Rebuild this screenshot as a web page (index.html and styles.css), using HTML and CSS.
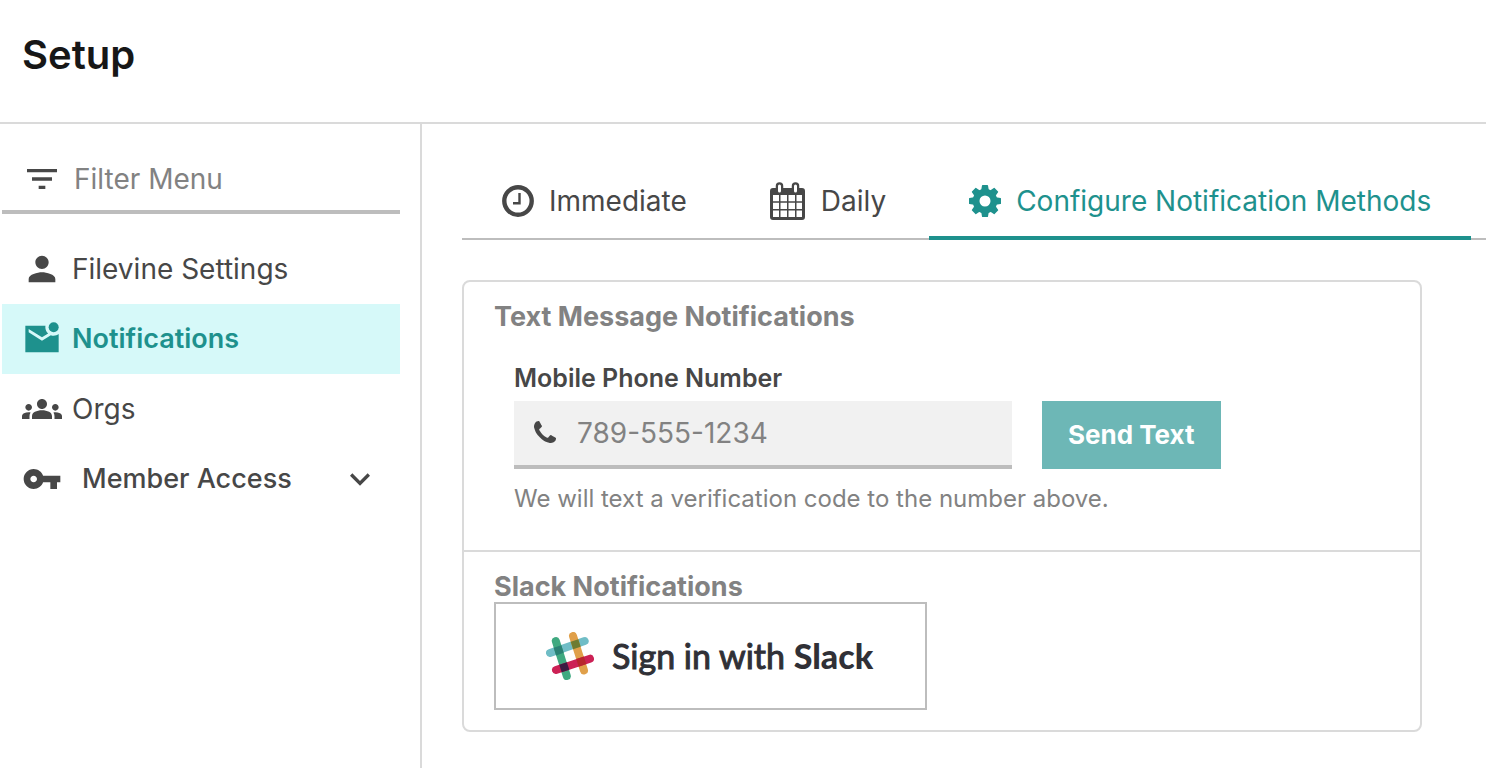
FILE: index.html
```html
<!DOCTYPE html>
<html lang="en">
<head>
<meta charset="utf-8">
<meta name="viewport" content="width=device-width, initial-scale=1">
<title>Setup</title>
<link rel="stylesheet" href="styles.css">
</head>
<body>
<header class="header"><h1 class="title">Setup</h1></header>
<div class="layout">
  <aside class="sidebar">
    <div class="filter">
      <svg class="icon" viewBox="0 0 24 24" aria-hidden="true"><path d="M10 18h4v-2h-4v2zM3 6v2h18V6H3zm3 7h12v-2H6v2z"/></svg>
      <input class="filter-input" type="text" placeholder="Filter Menu" aria-label="Filter Menu">
    </div>
    <nav class="menu">
      <a class="menu-item" href="#settings">
        <svg class="icon" viewBox="0 0 24 24" aria-hidden="true"><path d="M12 12c2.21 0 4-1.79 4-4s-1.79-4-4-4-4 1.79-4 4 1.79 4 4 4zm0 2c-2.67 0-8 1.34-8 4v2h16v-2c0-2.66-5.330-4-8-4z"/></svg>
        <span>Filevine Settings</span>
      </a>
      <a class="menu-item menu-item-active" href="#notifications" aria-current="page">
        <svg class="icon" viewBox="0 0 24 24" aria-hidden="true"><path d="M22 8.980V20H2V4h12.100c-.060.320-.100.660-.100 1 0 1.480.650 2.790 1.670 3.710L12 11 4 6v2l8 5 5.300-3.320c.540.200 1.100.320 1.700.320 1.130 0 2.160-.390 3-1.020z"/><circle cx="19" cy="5" r="3"/></svg>
        <span>Notifications</span>
      </a>
      <a class="menu-item" href="#orgs">
        <svg class="icon" viewBox="0 0 24 24" aria-hidden="true"><path d="M12 12.750c1.630 0 3.070.390 4.240.900 1.080.480 1.760 1.560 1.760 2.730V18H6v-1.610c0-1.180.680-2.260 1.760-2.730 1.170-.520 2.610-.910 4.240-.910zM4 13c1.100 0 2-.900 2-2s-.900-2-2-2-2 .900-2 2 .900 2 2 2zm1.130 1.100c-.370-.060-.740-.100-1.130-.100-.990 0-1.930.210-2.780.580C.480 14.900 0 15.620 0 16.430V18h4.500v-1.610c0-.830.230-1.610.630-2.290zM20 13c1.100 0 2-.900 2-2s-.900-2-2-2-2 .900-2 2 .900 2 2 2zm4 3.430c0-.810-.480-1.530-1.220-1.850-.850-.370-1.790-.580-2.780-.580-.390 0-.760.040-1.130.100.400.680.630 1.460.630 2.290V18H24v-1.570zM12 6c1.660 0 3 1.340 3 3s-1.340 3-3 3-3-1.340-3-3 1.340-3 3-3z"/></svg>
        <span>Orgs</span>
      </a>
      <button class="menu-item menu-group" type="button" aria-expanded="false">
        <svg class="icon" viewBox="0 0 24 24" aria-hidden="true"><path d="M12.650 10C11.830 7.670 9.610 6 7 6c-3.310 0-6 2.690-6 6s2.690 6 6 6c2.610 0 4.830-1.670 5.650-4H17v4h4v-4h2v-4H12.650zM7 14c-1.100 0-2-.900-2-2s.900-2 2-2 2 .900 2 2-.900 2-2 2z"/></svg>
        <span class="menu-label">Member Access</span>
        <svg class="icon" viewBox="0 0 24 24" aria-hidden="true"><path d="M16.590 8.590 12 13.170 7.410 8.590 6 10l6 6 6-6z"/></svg>
      </button>
    </nav>
  </aside>
  <main class="main">
    <nav class="tabs">
      <a class="tab" href="#immediate">
        <svg class="tab-icon" viewBox="0 0 32 32" aria-hidden="true"><circle cx="16" cy="16" r="13.700" fill="none" stroke="currentColor" stroke-width="4.400"/><path d="M17.500 8v10.200H11" fill="none" stroke="currentColor" stroke-width="2.400"/></svg>
        <span>Immediate</span>
      </a>
      <a class="tab" href="#daily">
        <svg class="calendar-icon" viewBox="0 0 36 38" aria-hidden="true"><path fill-rule="evenodd" d="M3 6h29a3 3 0 0 1 3 3v26a3 3 0 0 1-3 3H3a3 3 0 0 1-3-3V9a3 3 0 0 1 3-3zM3 13v6.300h6V13zm7.500 0v6.300h6.500V13zm8 0v6.300h6.500V13zm8 0v6.300H32V13zM3 20.700V27h6v-6.300zm7.500 0V27h6.500v-6.300zm8 0V27h6.500v-6.300zm8 0V27H32v-6.300zM3 28.500V35h6v-6.500zm7.500 0V35h6.500v-6.500zm8 0V35h6.500v-6.500zm8 0V35H32v-6.500z"/><path d="M9.500 4v5M25.500 4v5" fill="none" stroke="currentColor" stroke-width="7.500" stroke-linecap="round"/><path d="M9.500 4v5M25.500 4v5" fill="none" stroke="#fff" stroke-width="3" stroke-linecap="round"/></svg>
        <span>Daily</span>
      </a>
      <a class="tab tab-active" href="#methods" aria-current="page">
        <svg class="tab-icon" viewBox="-16 -16 32 32" aria-hidden="true">
          <circle r="8.900" fill="none" stroke="currentColor" stroke-width="6.800"/>
          <g id="teeth"><path id="tooth" d="M-3.800-11l.8-4.500q.1-.5.600-.5h4.800q.5 0 .6.500L3.800-11zM-3.800 11l.8 4.500q.1.500.6.500h4.800q.5 0 .6-.500L3.800 11z"/><use href="#tooth" transform="rotate(90)"/></g>
          <use href="#teeth" transform="rotate(45)"/>
        </svg>
        <span>Configure Notification Methods</span>
      </a>
    </nav>
    <div class="card">
      <section class="section">
        <h2 class="section-title">Text Message Notifications</h2>
        <form class="phone-form">
          <label class="label" for="phone">Mobile Phone Number</label>
          <div class="phone-row">
            <div class="phone-field">
              <svg class="phone-icon" viewBox="0 0 1792 1792" aria-hidden="true"><path d="M1600 1240q0 27-10 70.500t-21 68.500q-21 50-122 106-94 51-186 51-27 0-53-3.500t-57.500-12.500-47-14.500-55.500-20.500-49-18q-98-35-175-83-127-79-264-216t-216-264q-48-77-83-175-3-9-18-49t-20.500-55.500-14.500-47-12.500-57.500-3.500-53q0-92 51-186 56-101 106-122 25-11 68.500-21t70.500-10q14 0 21 3 18 6 53 76 11 19 30 54t35 63.500 31 53.500q3 4 17.500 25t21.500 35.500 7 28.500q0 20-28.500 50t-62 55-62 53-28.500 46q0 9 5 22.500t8.500 20.500 14 24 11.500 19q76 137 174 235t235 174q2 1 19 11.500t24 14 20.500 8.500 22.500 5q18 0 46-28.500t53-62 55-62 50-28.500q14 0 28.500 7t35.500 21.500 25 17.500q25 15 53.500 31t63.500 35 54 30q70 35 76 53 3 7 3 21z"/></svg>
              <input class="phone-input" id="phone" type="tel" placeholder="789-555-1234">
            </div>
            <button class="send" type="button">Send Text</button>
          </div>
          <p class="help">We will text a verification code to the number above.</p>
        </form>
      </section>
      <section class="section">
        <h2 class="section-title">Slack Notifications</h2>
        <button class="slack" type="button">
          <svg class="slack-logo" viewBox="0 0 48 48" aria-hidden="true">
            <g fill="none" stroke-width="8" stroke-linecap="round">
              <path stroke="#70bdc6" d="M4 21 38.700 9"/><path stroke="#e0a04a" d="M27 4l11 34.500"/><path stroke="#3fa980" d="M9.800 9l11 35"/><path stroke="#cc2155" d="M10 38l34-11.300"/>
            </g>
            <path fill="#2b8174" d="M7.700 15.800l7.600-2.500 2.400 7.500-7.600 2.600z"/>
            <path fill="#6d7c31" d="M24.700 9.800l7.600-2.600 2.400 7.600-7.600 2.500z"/>
            <path fill="#3b1c42" d="M13.300 32.700l7.600-2.500 2.400 7.500-7.600 2.600z"/>
            <path fill="#b8262d" d="M30.300 27.100l7.600-2.500 2.400 7.500-7.600 2.600z"/>
          </svg>
          <span><span class="slack-action">Sign in with</span> <strong class="slack-name">Slack</strong></span>
        </button>
      </section>
    </div>
  </main>
</div>
</body>
</html>
```
FILE: styles.css
```css
* { box-sizing: border-box; }

body {
  margin: 0;
  min-height: 100vh;
  display: flex;
  flex-direction: column;
  background: #fff;
  color: #474747;
  font-family: Inter, "Liberation Sans", sans-serif;
  font-size: 28px;
  line-height: 36px;
}

button, input { font: inherit; color: inherit; }
svg { fill: currentColor; flex: none; }

.header {
  padding: 31px 22px 43px;
  border-bottom: 2px solid #dadada;
}
.title {
  margin: 0;
  color: #171717;
  font-size: 40px;
  font-weight: 600;
  line-height: 48px;
}

.layout { flex: 1; display: flex; }

.sidebar {
  flex: none;
  width: 422px;
  padding: 22px 20px 22px 2px;
  border-right: 2px solid #dadada;
}
.icon { width: 40px; height: 40px; }
.filter {
  display: flex;
  align-items: center;
  height: 68px;
  padding: 2px 0 0 20px;
  border-bottom: 4px solid #bdbdbd;
}
.filter-input {
  flex: 1;
  min-width: 0;
  padding: 0 12px;
  border: 0;
  background: none;
  outline: 0;
}
.filter-input::placeholder, .phone-input::placeholder { color: #828282; opacity: 1; }

.menu { display: flex; flex-direction: column; margin-top: 20px; }
.menu-item {
  display: flex;
  align-items: center;
  gap: 10px;
  height: 70px;
  padding: 0 20px;
  border: 0;
  background: none;
  color: inherit;
  text-align: left;
  text-decoration: none;
}
.menu-item-active {
  background: #d6f9f9;
  color: #1e918d;
  font-size: 27px;
  font-weight: 600;
}
.menu-group { gap: 20px; font-size: 27px; font-weight: 500; }
.menu-label { flex: 1; }

.main { flex: 1; min-width: 0; padding: 38px 0 36px 40px; }
.tabs {
  display: flex;
  gap: 3px;
  box-shadow: inset 0 -2px #bdbdbd;
}
.tab {
  display: flex;
  align-items: center;
  gap: 15px;
  height: 78px;
  padding: 4px 40px 0;
  border-bottom: 4px solid transparent;
  color: inherit;
  text-decoration: none;
  white-space: nowrap;
}
.tab-active { color: #1e918d; border-bottom-color: #1e918d; }
.tab-icon { width: 32px; height: 32px; }
.calendar-icon { width: 36px; height: 38px; }

.card {
  margin: 40px 64px 0 0;
  border: 2px solid #dadada;
  border-radius: 8px;
}
.section { padding: 20px 30px; }
.section + .section { border-top: 2px solid #dadada; }
.section-title {
  margin: 0;
  color: #828282;
  font-size: 27px;
  font-weight: 700;
  line-height: 30px;
}
.phone-form { padding: 30px 20px 15px; }
.label {
  display: block;
  margin-bottom: 7px;
  font-size: 25px;
  font-weight: 600;
  line-height: 32px;
}
.phone-row { display: flex; gap: 30px; }
.phone-field {
  display: flex;
  align-items: center;
  flex: 0 1 498px;
  min-width: 0;
  height: 68px;
  padding: 0 17px;
  background: #f1f1f1;
  border-bottom: 4px solid #bdbdbd;
}
.phone-icon { width: 28px; height: 28px; }
.phone-input {
  flex: 1;
  min-width: 0;
  padding: 0 18px;
  border: 0;
  background: none;
  outline: 0;
}
.send {
  padding: 0 26px;
  border: 0;
  background: #6db7b6;
  color: #fff;
  font-weight: 700;
  font-size: 26px;
}
.help {
  margin: 14px 0 0;
  color: #828282;
  font-size: 24px;
  line-height: 32px;
}
.slack {
  display: flex;
  align-items: center;
  gap: 18px;
  height: 108px;
  padding: 0 52px 0 50px;
  border: 2px solid #bdbdbd;
  background: #fff;
  color: #303036;
  font-family: Lato, sans-serif;
  font-size: 34px;
}
.slack-logo { width: 48px; height: 48px; }
.slack-action { -webkit-text-stroke: 1px currentColor; }
.slack-name { font-weight: 900; }
```
